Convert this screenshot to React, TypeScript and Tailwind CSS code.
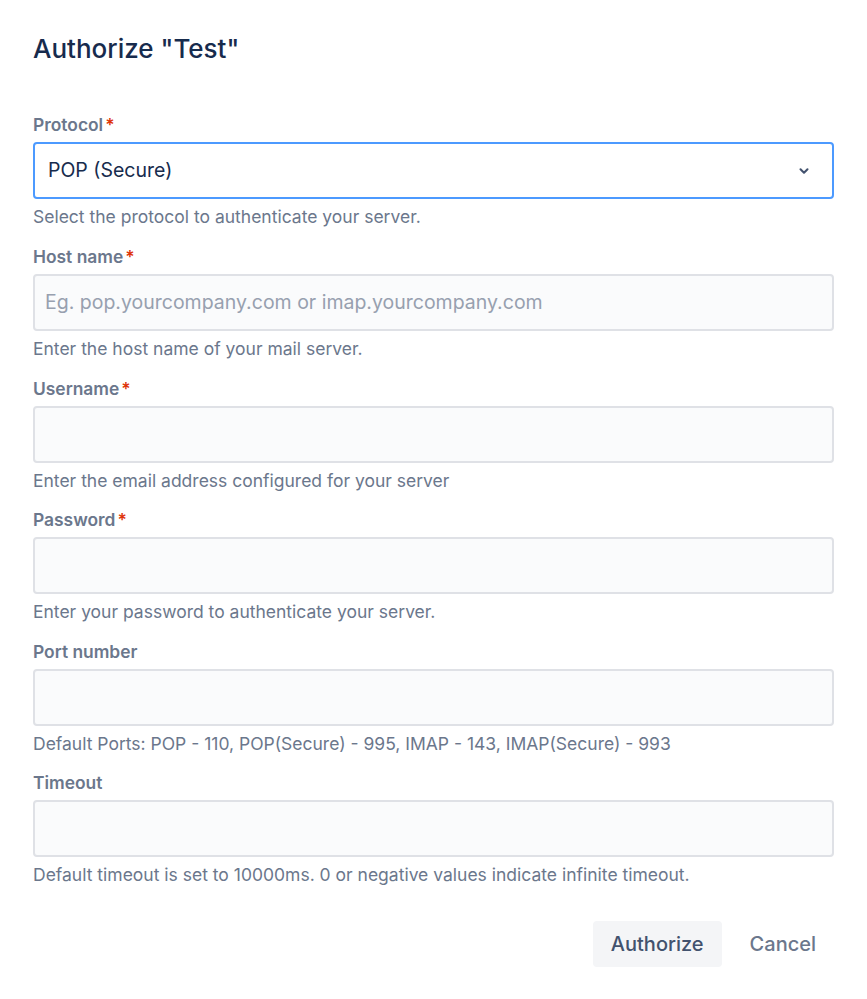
import React from "react";

const font = { fontFamily: "Inter, 'Noto Sans', sans-serif" };

function Label({ text, required }: { text: string; required?: boolean }) {
  return (
    <div className="text-[17.4px] leading-[20px] font-semibold text-[#6B778C]">
      {text}
      {required && <span className="text-[#DE350B] ml-[2px]">*</span>}
    </div>
  );
}

function Helper({ text }: { text: string }) {
  return <div className="mt-[8px] text-[17.5px] leading-[20px] text-[#6B778C]">{text}</div>;
}

function TextField({ label, required, helper, placeholder, first }: { label: string; required?: boolean; helper: string; placeholder?: string; first?: boolean }) {
  return (
    <div className={first ? "mt-[20px]" : "mt-[19.6px]"}>
      <Label text={label} required={required} />
      <div className="mt-[7px] h-[57px] rounded-[4px] border-2 border-[#DFE1E6] bg-[#FAFBFC] flex items-center px-[10px]">
        {placeholder && <span className="text-[19.5px] text-[#97A0AF]">{placeholder}</span>}
      </div>
      <Helper text={helper} />
    </div>
  );
}

export default function App() {
  return (
    <div className="w-[867px] h-[999px] bg-white px-[33px] pt-[33px]" style={font}>
      <h1 className="text-[26px] leading-[32px] font-medium text-[#172B4D]">Authorize "Test"</h1>
      <div className="mt-[50px]">
        <Label text="Protocol" required />
        <div className="mt-[7px] h-[57px] rounded-[4px] border-2 border-[#4C9AFF] bg-white flex items-center justify-between pl-[13px] pr-[21px]">
          <span className="text-[19.5px] text-[#172B4D]">POP (Secure)</span>
          <svg width="14" height="14" viewBox="0 0 24 24" fill="none">
            <path d="M6 9l6 6 6-6" stroke="#42526E" strokeWidth="3.5" strokeLinecap="round" strokeLinejoin="round" />
          </svg>
        </div>
        <Helper text="Select the protocol to authenticate your server." />
      </div>
      <TextField first label="Host name" required helper="Enter the host name of your mail server." placeholder="Eg. pop.yourcompany.com or imap.yourcompany.com" />
      <TextField label="Username" required helper="Enter the email address configured for your server" />
      <TextField label="Password" required helper="Enter your password to authenticate your server." />
      <TextField label="Port number" helper="Default Ports: POP - 110, POP(Secure) - 995, IMAP - 143, IMAP(Secure) - 993" />
      <TextField label="Timeout" helper="Default timeout is set to 10000ms. 0 or negative values indicate infinite timeout." />
      <div className="mt-[36px] flex justify-end items-center gap-[12px] pr-[2px]">
        <button className="h-[46px] px-[18px] rounded-[4px] bg-[#F4F5F7] text-[20px] font-medium text-[#42526E]">Authorize</button>
        <button className="h-[46px] px-[16px] rounded-[4px] text-[20px] font-medium text-[#6B778C]">Cancel</button>
      </div>
    </div>
  );
}
